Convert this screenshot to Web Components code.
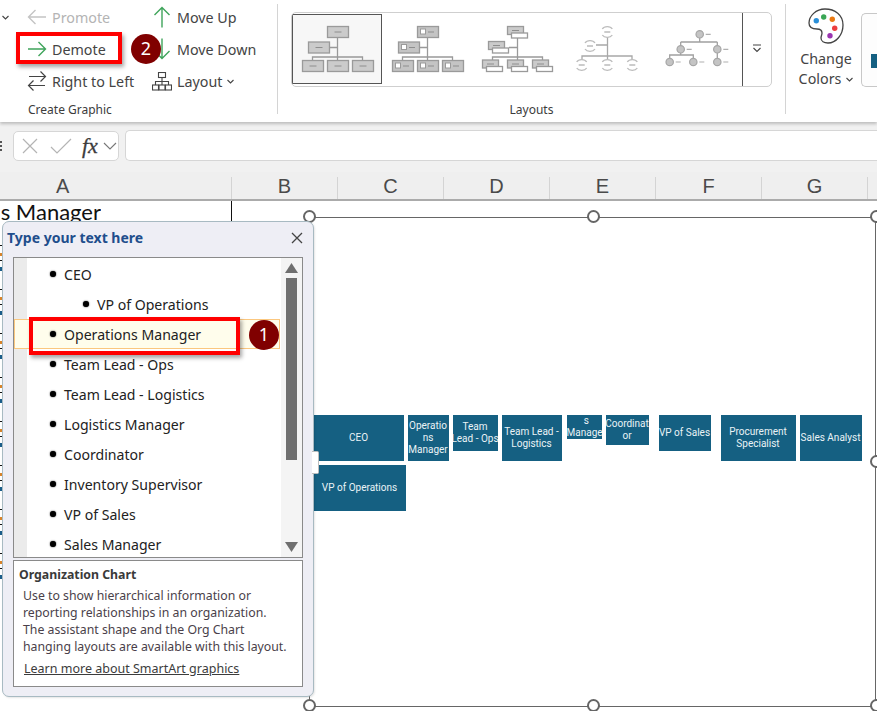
<!DOCTYPE html>
<html><head><meta charset="utf-8">
<style>
html,body{margin:0;padding:0;width:877px;height:711px;overflow:hidden;background:#fff;font-family:"Noto Sans","Open Sans",sans-serif;color:#444}
x-app{position:relative}
</style></head><body>
<x-app></x-app>
<script>
function def(name, css, html, init){
  customElements.define(name, class extends HTMLElement{
    connectedCallback(){
      if(this.shadowRoot) return;
      const r=this.attachShadow({mode:'open'});
      r.innerHTML='<style>'+css+'</style>'+(typeof html==='function'?html(this):html);
      if(init) init(this,r);
    }
  });
}
const attr=(e,n,d='')=>e.getAttribute(n)??d;

const icons={
  promote:'<svg width="20" height="16" viewBox="0 0 20 16" fill="none" stroke="#c4c4c4" stroke-width="1.4"><path d="M19 8H1.5M8.5 1 1.5 8l7 7"/></svg>',
  demote:'<svg width="20" height="16" viewBox="0 0 20 16" fill="none" stroke="#3fa45b" stroke-width="1.4"><path d="M1 8h17.5M11.5 1l7 7-7 7"/></svg>',
  rtl:'<svg width="20" height="20" viewBox="0 0 20 20" fill="none" stroke="#444" stroke-width="1.2"><path d="M2 5.500H18.500M13.500 .5l5 5-5 5M18 14.500H1.500M6.500 9.500l-5 5 5 5"/></svg>',
  up:'<svg width="20" height="22" viewBox="0 0 20 22" fill="none" stroke="#3fa45b" stroke-width="1.4"><path d="M10 21.5V1.5M2.5 9 10 1.5 17.500 9"/></svg>',
  down:'<svg width="20" height="22" viewBox="0 0 20 22" fill="none" stroke="#3fa45b" stroke-width="1.4"><path d="M10 .5v20M2.500 13 10 20.500 17.500 13"/></svg>',
  layout:'<svg width="20" height="19" viewBox="0 0 20 19" fill="none" stroke="#444" stroke-width="1.1"><rect x="6.500" y=".5" width="7" height="5"/><rect x=".5" y="13" width="6" height="5"/><rect x="7" y="13" width="6" height="5"/><rect x="13.500" y="13" width="6" height="5"/><path d="M10 5.500V13M3.500 13V9.500h13V13"/></svg>',
  chev:'<svg width="7" height="5" viewBox="0 0 7 5" fill="none" stroke="#444" stroke-width="1.1"><path d="M.5 1 3.500 4l3-3"/></svg>'
};

/* ribbon command */
def('x-cmd',`:host{display:flex;align-items:center;height:32px;white-space:nowrap;font-size:14.3px;color:#444}
.i{width:20px;display:flex;justify-content:center;margin-right:5px;flex:none}
:host([off]){color:#b4b4b4}.c{margin-left:5px;display:inline-flex}`,
e=>`<span class="i">${icons[attr(e,'icon')]}</span><slot></slot>${e.hasAttribute('menu')?`<span class="c">${icons.chev}</span>`:''}`);

/* org-chart thumbnails */
function box(x,y,w,h,fill,stroke,dash=true){return `<rect x="${x+.5}" y="${y+.5}" width="${w}" height="${h}" fill="${fill}" stroke="${stroke}" stroke-width="1.300"/>`+(dash?`<path d="M${x+w/2-3} ${y+h/2+.5}h7" stroke="#8e8e8e"/>`:'')}
const lines=(c='#999')=>`<path d="M45.500 23V46M37 33.500H45.500M20.500 46V43H70.500V46" fill="none" stroke="${c}" stroke-width="1.300"/>`;
const pos=[[35,12,21,11],[16,27.500,21,11],[10,46,21,11],[35,46,21,11],[60,46,21,11]];
const thumbs=[
 lines()+pos.map(p=>box(...p,'#cbcbcb','#9a9a9a')).join(''),
 lines()+pos.map(p=>box(...p,'#c4c4c4','#9a9a9a',false)+`<rect x="${p[0]+3.5}" y="${p[1]+3}" width="5" height="5" fill="#fff" stroke="#9a9a9a"/><path d="M${p[0]+11} ${p[1]+6}h6" stroke="#8e8e8e"/>`).join(''),
 lines()+[[35,12],[16,27],[10,45.500],[35,45.500],[60,45.500]].map(([x,y])=>box(x,y,16,8,'#cbcbcb','#9a9a9a')+box(x+4,y+6.500,16,5,'#fff','#9a9a9a',false)).join(''),
 `<path d="M45.500 23V45M34 31H45.500M20 47V42H70V47" fill="none" stroke="#a8a8a8" stroke-width="1.300"/>`+[[45.3,18],[28,32],[19.700,51],[45.300,51],[70.300,51]].map(([x,y])=>`<path d="M${x-5} ${y-3}a5.500 4 0 0 1 10 0M${x-5} ${y+3}a5.500 4 0 0 0 10 0M${x-3} ${y}h6" fill="#fff" stroke="#bcbcbc" stroke-width="1.300"/>`).join(''),
 `<path d="M47.700 24V28M28.700 28H65.300M28.700 28V32M65.300 28V44M28.700 39V41M17.700 44V41H41.300V44" fill="none" stroke="#a0a0a0" stroke-width="1.300"/>`+[[47.7,20.300],[28.700,35.300],[65.300,35.300],[17.700,48],[41.300,48],[65.300,48]].map(([x,y])=>`<circle cx="${x}" cy="${y}" r="3.700" fill="#c4c4c4" stroke="#a6a6a6" stroke-width="1.200"/><path d="M${x+6} ${y}h5" stroke="#b0b0b0" stroke-width="1.200"/>`).join('')
];
def('x-thumb',`:host{display:block;width:90px;height:70px;flex:none;box-sizing:border-box}
:host([selected]){outline:1px solid #555;outline-offset:-1px;background:#f7f7f7}
svg{display:block}`,e=>`<svg width="90" height="70" viewBox="0 0 90 70">${thumbs[+attr(e,'n')]}</svg>`);

def('x-gallery',`:host{display:flex;box-sizing:border-box;width:481px;height:75px;border:1px solid #cfcfcf;border-radius:5px;padding-top:1px;overflow:hidden}
.items{display:flex;flex:1}
.more{width:29px;margin-top:-1px;box-sizing:border-box;border-left:1px solid #555;border-top:0;display:flex;align-items:center;justify-content:center;flex:none;padding-bottom:3px}
`,`<div class="items"><x-thumb n="0" selected></x-thumb><x-thumb n="1"></x-thumb><x-thumb n="2"></x-thumb><x-thumb n="3"></x-thumb><x-thumb n="4"></x-thumb></div>
<div class="more"><svg width="10" height="9" viewBox="0 0 10 9" fill="none" stroke="#444" stroke-width="1.100"><path d="M1 1h8M1.500 4 5 7.500 8.500 4"/></svg></div>`);

def('x-group',`:host{display:flex;flex-direction:column;align-items:center;height:119px;box-sizing:border-box;flex:none}
:host([left]){align-items:flex-start}
:host([left]) .label{padding-left:28px}
.body{flex:1;align-self:stretch;min-height:0}
.label{height:18px;line-height:18px;font-size:12px;color:#3c3c3c}`,
e=>`<div class="body"><slot></slot></div><div class="label">${attr(e,'label')}</div>`);

def('x-ribbon',`:host{display:flex;height:122px;background:#fff;box-shadow:0 2px 3px rgba(0,0,0,.22);position:relative;z-index:2;flex:none;overflow:hidden}
.sep{width:1px;background:#d4d4d4;margin:4px 0 8px;flex:none}
.g1{display:grid;grid-template-columns:27px 125px 100px;grid-auto-rows:32px;padding-top:1px;align-items:center}
.g2{display:flex;justify-content:center;padding-top:12px}
.cc{display:flex;flex-direction:column;align-items:center;padding-top:8px;font-size:14.300px;line-height:20px}
.cc svg{margin-bottom:5px;display:block}
.cc .c{display:flex;align-items:center;gap:5px}
.cc .c svg{margin:0}
.peek{width:20px;height:74px;margin:13px 0 0 -5px;flex:none;box-sizing:border-box;border:1px solid #c8c8c8;border-right:0;border-radius:5px 0 0 5px;padding:40px 0 0 9px;overflow:hidden;background:#fdfdfd}
.peek i{display:block;width:12px;height:14px;background:#156082}
.c1{display:flex;padding-left:2px}
.gcc{width:80px;flex:none}
`,`<x-group left label="Create Graphic" style="width:277px"><div class="g1">
<div class="c1">${icons.chev}</div><x-cmd icon="promote" off>Promote</x-cmd><x-cmd icon="up">Move Up</x-cmd>
<div></div><x-cmd icon="demote">Demote</x-cmd><x-cmd icon="down">Move Down</x-cmd>
<div></div><x-cmd icon="rtl">Right to Left</x-cmd><x-cmd icon="layout" menu>Layout</x-cmd>
</div></x-group>
<div class="sep"></div>
<x-group label="Layouts" style="width:507px"><div class="g2"><x-gallery></x-gallery></div></x-group>
<div class="sep"></div>
<div class="gcc"><div class="cc">
<svg width="36" height="36" viewBox="0 0 36 36"><path d="M17 1C8 1 1 8 1 15c0 5 4 6 8 6 3 0 5 1 5 4 0 2-1 3-1 5 0 3 3 5 7 5 8 0 15-8 15-18S27 1 17 1z" fill="#fff" stroke="#444" stroke-width="1.300"/><circle cx="8.300" cy="12.700" r="2.700" fill="#2a8fd8"/><circle cx="15.700" cy="9" r="2.700" fill="#3aa655"/><circle cx="24.300" cy="11.300" r="2.700" fill="#ea7a12"/><circle cx="26.700" cy="20.300" r="2.700" fill="#ec3f3f"/><circle cx="22" cy="27.700" r="2.700" fill="#9a35b0"/></svg>
<div>Change</div><div class="c">Colors ${icons.chev}</div></div></div>
<div class="peek"><i></i></div>`);

def('x-formula',`:host{display:flex;height:50px;background:#f1f1f1;flex:none;box-sizing:border-box;padding:9px 0 11px;position:relative}
.dots{width:13px;display:flex;flex-direction:column;justify-content:center;gap:2px;align-items:flex-start;flex:none}
.dots i{width:2px;height:2px;background:#555;display:block}
.fx{width:106px;box-sizing:border-box;background:#fff;border:1px solid #d6d6d6;border-radius:5px;display:flex;align-items:center;padding-left:7px;flex:none;margin-right:6px}
.t{font:italic 400 22px "Liberation Serif",serif;color:#3c3c3c;margin-left:10px;margin-right:5px;line-height:20px;-webkit-text-stroke:.3px #3c3c3c}
.in{flex:1;background:#fff;border:1px solid #d6d6d6;border-right:0;border-radius:5px 0 0 5px;margin-top:-1px}
svg{display:block;flex:none}`,
`<div class="dots"><i></i><i></i><i></i></div>
<div class="fx"><svg width="18" height="18" viewBox="0 0 18 18" fill="none" stroke="#b4b4b4" stroke-width="1.200"><path d="M2 2l14 14M16 2 2 16"/></svg>
<svg style="margin-left:11px" width="22" height="18" viewBox="0 0 22 18" fill="none" stroke="#b4b4b4" stroke-width="1.200"><path d="M1 10l6 6L21 2"/></svg>
<span class="t">fx</span><svg width="14" height="10" viewBox="0 0 14 10" fill="none" stroke="#777" stroke-width="1.100"><path d="M1 2l6 6 6-6"/></svg></div><div class="in"></div>`);

def('x-headers',`:host{display:flex;height:29px;background:#efefef;border-bottom:2px solid #ababab;flex:none;box-sizing:border-box;font-family:"Liberation Sans",sans-serif;overflow:hidden}
.h{width:106px;flex:none;box-sizing:border-box;border-right:1px solid #d4d4d4;display:flex;align-items:center;justify-content:center;font-size:20px;color:#4a4a4a;padding-bottom:3px;margin-top:5px}
.a{width:232px;justify-content:flex-start;padding-left:56px}`,
`<div class="h a">A</div><div class="h">B</div><div class="h">C</div><div class="h">D</div><div class="h">E</div><div class="h">F</div><div class="h">G</div><div class="h"></div>`);

/* SmartArt shape on its free canvas */
def('x-node',`:host{position:absolute;background:#156082;color:#eaf3f6;font:400 10px/12px Roboto,sans-serif;display:flex;align-items:center;justify-content:center;text-align:center;overflow:hidden;white-space:nowrap}
div{flex:none}`,`<div><slot></slot></div>`);

def('x-handle',`:host{position:absolute;width:13px;height:13px;box-sizing:border-box;border:2.500px solid #666;border-radius:50%;background:#fff;margin:-8px 0 0 -7px}`,'');

def('x-chart',`:host{position:absolute;left:309px;top:16px;width:567px;height:490px;border:1.500px solid #666;box-sizing:border-box}
.c{position:absolute;inset:0}`,`<div class="c"><slot></slot></div>`);

def('x-sheet',`:host{display:block;flex:1;position:relative;background:#fff;overflow:hidden;min-height:0}
.top{width:231.500px;height:30px;border-right:1.500px solid #111;box-sizing:border-box}
.t{display:flex;justify-content:flex-end;width:101px;height:30px;overflow:hidden;font:22px/22px Lato,sans-serif;color:#111;white-space:nowrap}
.edge{height:350px;width:2px;background:repeating-linear-gradient(#fff 0 14px,#111 14px 15px,#fff 15px 22px,#d8842a 22px 25px,#fff 25px 29px,#111 29px 30px,#fff 30px 36px,#1a5d8a 36px 40px,#fff 40px 44px)}`,
`<div class="top"><div class="t"><span>s Manager</span></div></div><div class="edge"></div><slot></slot>`);

def('x-row',`:host{display:flex;align-items:center;height:30px;box-sizing:border-box;padding-left:36px;font-size:14.100px;color:#222;white-space:nowrap;flex:none}
:host([lv="2"]){padding-left:69px}
:host([hi]){background:#fffdec;outline:1px solid #fbc77f;outline-offset:-1px;margin-right:1px}
i{width:6px;height:6px;border-radius:50%;background:#000;box-shadow:0 0 1.500px #000;margin-right:8px;flex:none}`,`<i></i><slot></slot>`);

def('x-pane',`:host{position:absolute;left:2px;top:20px;width:312px;height:476px;box-sizing:border-box;background:#eeeef5;border:1.500px solid #a8bac2;border-radius:7px;padding:0 10px;display:flex;flex-direction:column;box-shadow:1px 1px 2px rgba(0,0,0,.1)}
.head{display:flex;align-items:center;justify-content:space-between;height:31px;flex:none;margin:0 -6px 0 -6px;padding-right:6px}
.title{font-weight:700;font-size:14px;color:#1f4e8c}
svg{display:block}
.list{height:301px;flex:none;border:1.500px solid #8a8a8a;box-sizing:border-box;background:linear-gradient(90deg,#ebebeb 13px,#fff 13px);display:flex;overflow:hidden;margin-top:4px}
.rows{flex:1;display:flex;flex-direction:column;min-width:0;padding-top:1px}
.sb{width:21px;background:#f4f4f4;flex:none;display:flex;flex-direction:column;align-items:center;padding-top:5px;box-sizing:border-box}
.th{width:11px;height:182px;background:#6f6f6f;margin-top:5px;margin-bottom:auto}
.dn{margin-bottom:5px}
.info{height:127px;margin-top:2px;flex:none;border:1.500px solid #8a8a8a;box-sizing:border-box;background:#fff;padding:5px 0 0 5px;font-size:12.300px;line-height:17px;color:#4a3f4a}
.info b{display:block;color:#3a3a3a;font-size:12.300px;line-height:17px;margin-bottom:4px}
.p{padding-left:4px}
.a{padding-left:5px;margin-top:5px;text-decoration:underline;color:#3c3c3c;font-size:12.500px}
.tab{position:absolute;left:309px;top:229px;width:7px;height:23px;background:#fff;border:1px solid #bdbdbd;border-left:0;border-radius:0 2px 2px 0;box-sizing:border-box}`,
`<div class="head"><span class="title">Type your text here</span><svg width="12" height="12" viewBox="0 0 12 12" stroke="#444" stroke-width="1.300"><path d="M1 1l10 10M11 1 1 11"/></svg></div>
<div class="list"><div class="rows">
<x-row>CEO</x-row><x-row lv="2">VP of Operations</x-row><x-row hi>Operations Manager</x-row><x-row>Team Lead - Ops</x-row><x-row>Team Lead - Logistics</x-row><x-row>Logistics Manager</x-row><x-row>Coordinator</x-row><x-row>Inventory Supervisor</x-row><x-row>VP of Sales</x-row><x-row>Sales Manager</x-row>
</div><div class="sb"><svg width="13" height="10" viewBox="0 0 13 10"><path d="M6.500 0 13 10H0z" fill="#6f6f6f"/></svg><div class="th"></div><svg class="dn" width="13" height="10" viewBox="0 0 13 10"><path d="M0 0h13L6.500 10z" fill="#6f6f6f"/></svg></div></div>
<div class="info"><b>Organization Chart</b><div class="p">Use to show hierarchical information or<br>reporting relationships in an organization.<br>The assistant shape and the Org Chart<br>hanging layouts are available with this layout.</div><div class="a">Learn more about SmartArt graphics</div></div>
<div class="tab"></div>`);

/* overlays: annotation frame + numbered badge */
def('x-mark',`:host{position:absolute;box-sizing:border-box;border:4px solid #f00;box-shadow:2px 3px 4px rgba(0,0,0,.35);z-index:5}`,'');
def('x-badge',`:host{position:absolute;width:30px;height:30px;border-radius:50%;background:#800000;color:#fff;font-size:18px;line-height:29px;text-align:center;z-index:6}`,'<slot></slot>');

def('x-app',`:host{display:flex;flex-direction:column;width:877px;height:711px;overflow:hidden}`,
`<x-ribbon></x-ribbon><x-formula></x-formula><x-headers></x-headers>
<x-sheet>
<x-chart>
${[[5,198,90,46,'CEO'],[99,198,41,46,'Operatio<br>ns<br>Manager'],[144,198,45,36,'Team<br>Lead - Ops'],[193,198,60,46,'Team Lead -<br>Logistics'],[258,198,35,24,'s<br>Manager',1],[297,198,43,30,'Coordinat<br>or'],[350,198,52,36,'VP of Sales'],[412,198,75,46,'Procurement<br>Specialist'],[491,198,62,46,'Sales Analyst'],[5,248,92,46,'VP of Operations']].map(n=>`<x-node style="left:${n[0]-1.5}px;top:${n[1]-1.5}px;width:${n[2]}px;height:${n[3]}px${n[5]?';justify-content:flex-start':''}">${n[4]}</x-node>`).join('')}
<x-handle style="left:0;top:0"></x-handle><x-handle style="left:284px;top:0"></x-handle><x-handle style="left:567px;top:0"></x-handle>
<x-handle style="left:567px;top:245px"></x-handle>
<x-handle style="left:0;top:489px"></x-handle><x-handle style="left:284px;top:489px"></x-handle><x-handle style="left:567px;top:489px"></x-handle>
</x-chart>
<x-pane></x-pane>
</x-sheet>
<x-mark style="left:16px;top:32px;width:106px;height:32px"></x-mark>
<x-mark style="left:29px;top:317px;width:211px;height:38px"></x-mark>
<x-badge style="left:131px;top:34px">2</x-badge>
<x-badge style="left:249px;top:320px">1</x-badge>`);
</script>
</body></html>
